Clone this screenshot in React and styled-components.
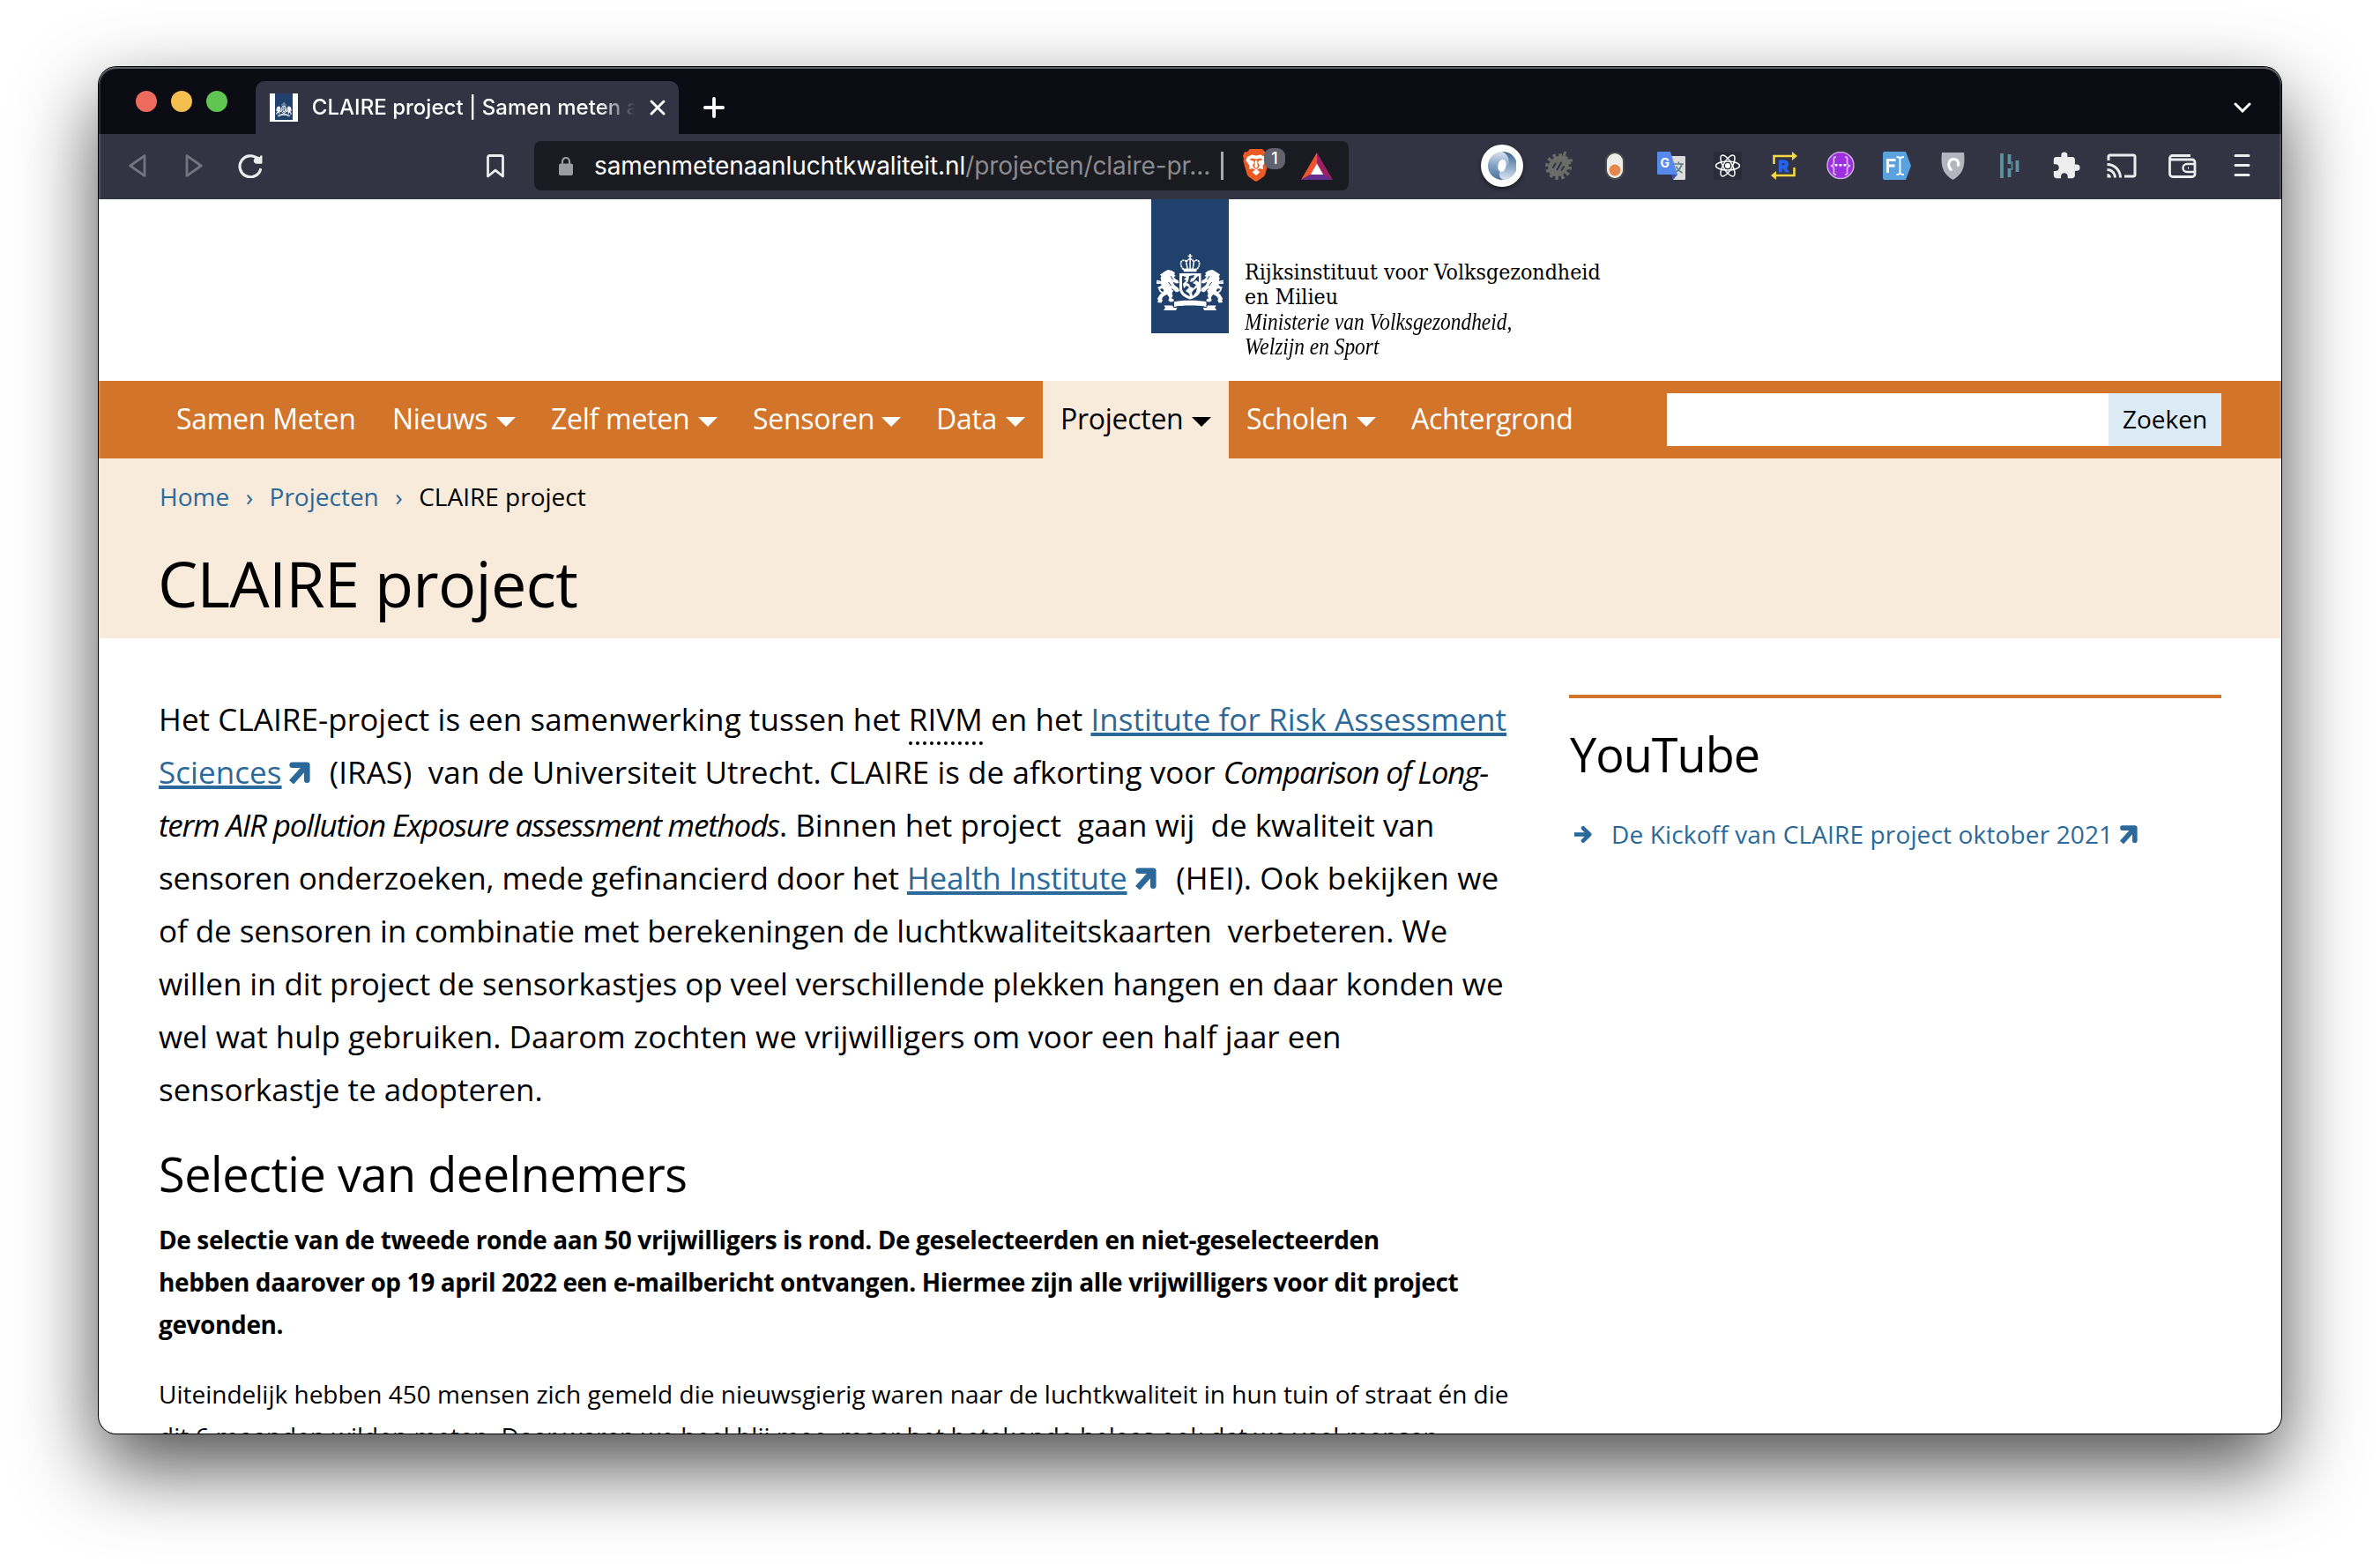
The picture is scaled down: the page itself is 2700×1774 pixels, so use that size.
import React from 'react';
import styled, { createGlobalStyle, css } from 'styled-components';
import { MdExtension, MdCast } from 'react-icons/md';

const sans = '"Open Sans", "Noto Sans", sans-serif';
const ui = 'Inter, Roboto, sans-serif';
const c = {
  orange: '#d2752b',
  sand: '#f8ebdc',
  link: '#2a6999',
  navy: '#20416c',
  tabs: '#0b0b14',
  toolbar: '#323443',
  address: '#1a1b20',
  icon: '#ededee',
};

const Global = createGlobalStyle`
  * { box-sizing: border-box; }
  body { margin: 0; background: #fff; }
  h1, h2, p, ul { margin: 0; padding: 0; font-weight: 400; }
  svg { display: block; flex: none; }
`;

const Desktop = styled.div`
  height: 1774px;
  padding: 76px 112px 148px;
  overflow: hidden;
  background: #fff;
`;

const Window = styled.div`
  position: relative;
  height: 1550px;
  display: flex;
  flex-direction: column;
  overflow: hidden;
  border-radius: 20px;
  background: #fff;
  box-shadow: 0 0 0 1px #000, 0 37px 90px rgba(0, 0, 0, 0.7);
  &::after {
    content: '';
    position: absolute;
    inset: 0;
    border-radius: 20px;
    pointer-events: none;
    box-shadow: inset 0 2px 0 rgba(255, 255, 255, 0.24), inset 0 0 0 2px rgba(255, 255, 255, 0.13);
  }
`;

/* ---------- browser chrome ---------- */

const TabBar = styled.div`
  height: 76px;
  flex: none;
  display: flex;
  padding-right: 12px;
  background: ${c.tabs};
`;

const Lights = styled.div`
  display: flex;
  gap: 16px;
  width: 178px;
  padding: 27px 0 0 42px;
`;

const Light = styled.span`
  width: 24px;
  height: 24px;
  border-radius: 50%;
  background: ${(p) => p.$color};
`;

const Tab = styled.div`
  display: flex;
  align-items: center;
  width: 480px;
  height: 60px;
  margin-top: 16px;
  padding: 0 14px 0 16px;
  border-radius: 10px 10px 0 0;
  background: ${c.toolbar};
`;

const Favicon = styled.span`
  display: flex;
  justify-content: center;
  width: 32px;
  height: 32px;
  background: #fff;
`;

const FaviconBar = styled.span`
  display: flex;
  justify-content: center;
  align-items: flex-end;
  width: 20px;
  height: 30px;
  padding-bottom: 4px;
  background: ${c.navy};
`;

const TabTitle = styled.span`
  width: 368px;
  margin: 0 16px 0 16px;
  overflow: hidden;
  white-space: nowrap;
  color: #fff;
  font: 500 24px/40px ${ui};
  letter-spacing: 0.02px;
  -webkit-mask-image: linear-gradient(90deg, #000 325px, transparent 367px);
  mask-image: linear-gradient(90deg, #000 325px, transparent 367px);
`;

const TabButton = styled.span`
  display: flex;
  align-items: center;
  justify-content: center;
  width: ${(p) => p.$width || 80}px;
  height: 60px;
  margin-top: 16px;
  margin-left: ${(p) => (p.$end ? 'auto' : 0)};
`;

const Toolbar = styled.div`
  height: 74px;
  flex: none;
  display: flex;
  padding: 8px 12px 0;
  background: ${c.toolbar};
`;

const Slot = styled.span`
  display: flex;
  align-items: center;
  justify-content: center;
  width: ${(p) => p.$width || 64}px;
  height: 56px;
  color: ${c.icon};
  ${(p) => p.$afterGap && css`margin-left: 214px;`}
`;

const AddressBar = styled.div`
  display: flex;
  align-items: center;
  width: 924px;
  height: 56px;
  margin-left: 12px;
  padding-left: 28px;
  border-radius: 8px;
  background: ${c.address};
`;

const Address = styled.span`
  width: 711px;
  margin-left: 24px;
  white-space: nowrap;
  color: #8b8b8f;
  font: 400 28px/56px ${ui};
  letter-spacing: -0.08px;
`;

const Domain = styled.span`
  color: #fff;
`;

const Divider = styled.span`
  width: 3px;
  height: 32px;
  margin-right: 22px;
  background: #a9aaae;
`;

const Shields = styled.span`
  position: relative;
  width: 66px;
  height: 38px;
`;

const ShieldCount = styled.span`
  position: absolute;
  left: 24px;
  top: -1px;
  width: 24px;
  height: 24px;
  border-radius: 9px;
  background: #60626f;
  color: #fff;
  text-align: center;
  font: 500 18px/24px ${ui};
`;

const Extensions = styled.div`
  display: flex;
  margin-left: auto;
`;

const RoundBadge = styled.span`
  display: flex;
  align-items: center;
  justify-content: center;
  width: 48px;
  height: 48px;
  border-radius: 50%;
  background: #fff;
  box-shadow: 0 2px 5px rgba(0, 0, 0, 0.5);
`;

/* ---------- site ---------- */

const SiteHeader = styled.header`
  display: grid;
  grid-template-columns: 1fr 88px 1fr;
  height: 206px;
  flex: none;
  background: #fff;
`;

const LogoBar = styled.div`
  grid-column: 2;
  display: flex;
  justify-content: center;
  align-items: flex-end;
  height: 152px;
  padding-bottom: 26px;
  background: ${c.navy};
`;

const LogoText = styled.div`
  padding: 69px 0 0 18px;
  color: #000;
  white-space: nowrap;
`;

const LogoLine = styled.div`
  height: 28px;
  font: 400 24.7px/28px 'DejaVu Serif Condensed', 'DejaVu Serif', serif;
  ${(p) =>
    p.$italic &&
    css`
      font: italic 400 28px/27px 'Liberation Serif', serif;
      transform: scaleX(0.835);
      transform-origin: left;
    `}
`;

const Nav = styled.nav`
  display: flex;
  height: 88px;
  flex: none;
  padding: 0 68px;
  background: ${c.orange};
`;

const NavItem = styled.a`
  display: flex;
  align-items: center;
  justify-content: space-between;
  width: ${(p) => p.$width}px;
  padding: 0 20px;
  color: ${(p) => (p.$active ? '#000' : '#fff')};
  background: ${(p) => (p.$active ? c.sand : 'transparent')};
  font: 400 32px/86px ${sans};
  letter-spacing: -0.28px;
  white-space: nowrap;
`;

const NavLabel = styled.span`
  height: 88px;
`;

const Caret = styled.span`
  margin-top: 5px;
  border: 11px solid transparent;
  border-top-color: currentColor;
  border-bottom: 0;
`;

const Search = styled.form`
  display: flex;
  width: 629px;
  height: 60px;
  margin: 14px 0 0 auto;
`;

const SearchField = styled.input`
  flex: 1;
  min-width: 0;
  border: 0;
  border-radius: 0;
  background: #fff;
`;

const SearchButton = styled.button`
  width: 128px;
  padding: 0 0 2px;
  border: 0;
  background: #dceaf6;
  color: #000;
  font: 400 28px/58px ${sans};
`;

const TitleBand = styled.section`
  height: 204px;
  flex: none;
  padding: 19px 68px 0;
  background: ${c.sand};
  color: #000;
`;

const Crumbs = styled.div`
  padding-left: 1px;
  font: 400 28px/48px ${sans};
`;

const CrumbLink = styled.a`
  color: ${c.link};
`;

const CrumbSep = styled.span`
  margin: 0 18.5px;
  color: ${c.link};
`;

const PageTitle = styled.h1`
  margin-top: 26px;
  margin-left: -1px;
  font: 400 72px/96px ${sans};
  letter-spacing: -0.8px;
`;

const Content = styled.main`
  display: grid;
  grid-template-columns: 1560px 740px;
  column-gap: 40px;
  padding: 62px 68px 0;
  color: #000;
`;

const Lead = styled.p`
  font: 400 35px/60px ${sans};
  white-space: nowrap;
`;

const Line = styled.span`
  letter-spacing: ${(p) => p.$tracking}px;
`;

const Abbr = styled.span`
  padding-bottom: 2px;
  border-bottom: 4px dotted #000;
`;

const TextLink = styled.a`
  color: ${c.link};
  text-decoration: underline;
  text-decoration-thickness: 4px;
  text-underline-offset: 2px;
  text-decoration-skip-ink: none;
`;

const Term = styled.em`
  letter-spacing: -1.2px;
`;

const Heading = styled.h2`
  margin-top: ${(p) => p.$top}px;
  margin-left: ${(p) => p.$pull || 0}px;
  font: 400 54px/64px ${sans};
  letter-spacing: ${(p) => p.$tracking}px;
`;

const Strong = styled.p`
  margin-top: 19px;
  font: 700 28px/48px ${sans};
  letter-spacing: -0.39px;
  white-space: nowrap;
`;

const Body = styled.p`
  margin-top: 31px;
  font: 400 28px/48px ${sans};
  white-space: nowrap;
`;

const Aside = styled.aside`
  margin-top: 2px;
  border-top: 4px solid ${c.orange};
`;

const AsideLink = styled.a`
  display: flex;
  align-items: center;
  margin-top: 35px;
  padding-left: 6px;
  color: ${c.link};
  font: 400 28px/48px ${sans};
  letter-spacing: 0.14px;
  white-space: nowrap;
`;

const AsideLabel = styled.span`
  margin: 0 7px 0 22px;
`;

const InlineIcon = styled.svg`
  && {
    display: inline-block;
  }
  width: ${(p) => p.$size}px;
  height: ${(p) => p.$size}px;
  margin: ${(p) => p.$margin || 0};
`;

/* ---------- drawings ---------- */

const External = ({ size = 25, margin }) => (
  <InlineIcon $size={size} $margin={margin} viewBox="0 0 24 24" fill="none" stroke={c.link} strokeWidth="6.400">
    <path d="M4.500 3.600H20.400V20" strokeLinecap="round" strokeLinejoin="round" />
    <path d="M19.500 4.500 3.400 22.400" />
  </InlineIcon>
);

const Arms = ({ width, height }) => (
  <svg width={width} height={height} viewBox="0 0 76 64" preserveAspectRatio="none" fill="#fff">
    <path d="M37.300 0h1.600v1.700h1.600v1.500h-1.600V6h-1.600V3.200h-1.600V1.700h1.600z" />
    <path
      d="M30.500 17.500c-3-3-4-8-1.500-9.700 2-1.300 4.500-.2 5 1.500 1-2.800 3-3.600 4.100-3.600s3.100.8 4.100 3.600c.5-1.700 3-2.800 5-1.500 2.500 1.700 1.500 6.700-1.500 9.700z"
      fill="none"
      stroke="#fff"
      strokeWidth="1.700"
      strokeDasharray="2.200 .6"
    />
    <path d="M38.100 6v11M33.800 9.500l1.400 8M42.400 9.500l-1.400 8" stroke="#fff" strokeWidth="1.500" />
    <path d="M30.500 16.800h15.200l-.4 3.500H30.900z" />
    <path
      fillRule="evenodd"
      d="M26 22h24.500v17c0 7-6 10.500-12.300 12.500C32 49.500 26 46 26 39zM29 25l5 1-3 3 3 1-4 4 1 5 3-3 3 2-4 4 4 3 1 3c-4-1.500-9-4-9-9zM37 25l6-1-1 3-3 1-1 4 4-1 4-5 2-1v7l-3-2-4 3 4 2-3 4-4-2-1-3-3-1 2-2zM42 41l4-3-1 5-4 5-1-4z"
    />
    <g id="lion">
      <path d="M10 19.500l3-1.500 4.500 1 3.500 2.500-1 2 2 1.500-2.500 1 2 2.500 3 1.500 1 3-3 .5-4-2 2 4 4.500 3.500 1 3-3 1.500-4-2-1.500 3.500 1 2.500-1.500 3 2.500 1v2.500l-4 .5-2-1.800 1-3.200-2.500-3.500-4 2-2 3 1 1.500-1.500 3-4.500-.5 1-2.200-1-2 3-4.800 4.500-4.200-1.500-2.500-4 .5-2-1.700 2.500-1.200 3.500.2-2-3-4-.2-3-1.500-3 1 1-2.300 3.500-.2 4 1.500 2-2-1-3 1-2-1.500-2z" />
      <path
        d="M8 44C2 43 2.500 38 5.500 36.500S10 33 6.500 31M1 30.500l3.500 1"
        fill="none"
        stroke="#fff"
        strokeWidth="1.700"
        strokeLinecap="round"
      />
      <path d="M16 25l2.500 4M13.500 32l3 4M17 39.500l3.500 2.500" stroke={c.navy} strokeWidth="1" />
    </g>
    <use href="#lion" transform="translate(76.200) scale(-1 1)" />
    <path d="M20 54.500c6-2.300 30-2.300 36.500 0v5.500c-7-2-29-2-36.500 0zM8.500 58.500h9.500l1.500 2.500 4 .2-1.500 2.800H8l2-3zM67.700 58.500h-9.500l-1.500 2.500-4 .2 1.500 2.800h14l-2-3z" />
  </svg>
);

const Triangle = ({ flip }) => (
  <svg width="20" height="26" viewBox="0 0 20 26" fill="none" stroke="#72747f" strokeWidth="2.800" strokeLinejoin="round">
    <path d={flip ? 'M2 1.700 18.200 13 2 24.300z' : 'M18 1.700 1.800 13 18 24.300z'} />
  </svg>
);

const Reload = () => (
  <svg width="28" height="27" viewBox="0 0 28 27" fill="none">
    <path d="M25.500 17.500A12 12 0 1 1 22.300 5" stroke={c.icon} strokeWidth="3.200" strokeLinecap="round" />
    <path d="M27.500 1.500v8.200a1 1 0 0 1-1 1h-5.500a3.500 3.500 0 0 1-2.200-6l2.500-2.200 3.500.5 1-1.800z" fill={c.icon} />
  </svg>
);

const Bookmark = () => (
  <svg width="20" height="27" viewBox="0 0 20 27" fill="none" stroke={c.icon} strokeWidth="2.800" strokeLinejoin="round">
    <path d="M1.500 3.500a2 2 0 0 1 2-2h13a2 2 0 0 1 2 2V25L10 18.200 1.500 25z" />
  </svg>
);

const Lock = () => (
  <svg width="16" height="21" viewBox="0 0 16 21">
    <rect y="7.500" width="16" height="13.500" rx="2" fill="#9a9ca1" />
    <path d="M4 8V5a4 4 0 0 1 8 0v3" fill="none" stroke="#9a9ca1" strokeWidth="2.200" />
  </svg>
);

const Brave = () => (
  <svg width="30" height="37" viewBox="0 0 30 37">
    <path d="M8 0h14l3.500 3.500L28 3l2 5-1 3 .5 3-4 14c-.5 2-2 3.500-3.500 4.500l-5 3.500c-1.300 1-2.700 1-4 0l-5-3.500c-1.500-1-3-2.500-3.500-4.500L.5 14 1 11 0 8l2-5 2.500.5z" fill="#ec5a24" />
    <path d="M5 9l5-2.500 5 1 5-1L25 9l1.500 4-4 6 .5 4-4-1-4 2.500L11 22l-4 1 .5-4-4-6z" fill="#fff" />
    <path d="M7 12l5 1.500 1 2-2 3 1.500 3 2.500 1.500 2.500-1.500 1.500-3-2-3 1-2 5-1.500-3.500-1.500-3.500 1h-2l-3.500-1z" fill="#ec5a24" />
    <path d="M14 13h2l.8 7-1.800 2-1.800-2z" fill="#fff" />
    <path d="M10.500 26l4.500-2.500 4.500 2.500-4.500 4z" fill="#fff" />
  </svg>
);

const Rewards = () => (
  <svg width="36" height="31" viewBox="0 0 36 31">
    <path d="M18 0 0 31l11-6 7-12z" fill="#f0532d" />
    <path d="M18 0l18 31-11-6-7-12z" fill="#9e1f63" />
    <path d="M0 31h36l-11-6.500H11z" fill="#662d91" />
    <path d="M18 12.500 25.200 25H10.800z" fill="#fff" />
  </svg>
);

const Swirl = () => (
  <svg width="32" height="32" viewBox="0 0 32 32">
    <defs>
      <linearGradient id="swirlA" x1=".5" y1="0" x2=".4" y2="1">
        <stop offset="0" stopColor="#d9e3ee" />
        <stop offset=".5" stopColor="#86a5c6" />
        <stop offset="1" stopColor="#4a6f99" />
      </linearGradient>
      <linearGradient id="swirlB" x1=".5" y1="1" x2=".6" y2="0">
        <stop offset="0" stopColor="#d9e3ee" />
        <stop offset=".5" stopColor="#86a5c6" />
        <stop offset="1" stopColor="#3d628d" />
      </linearGradient>
    </defs>
    <circle cx="16" cy="16" r="16" fill="url(#swirlA)" />
    <path d="M16 0c7 2 10 12 6 17.500-2 3-4 5.500-8.500 5.500C12 28 14 31 18 32A16 16 0 0 0 16 0z" fill="url(#swirlB)" />
    <ellipse cx="16" cy="16" rx="4.600" ry="7.200" transform="rotate(12 16 16)" fill="#fff" />
  </svg>
);

const Bug = () => (
  <svg width="34" height="34" viewBox="0 0 34 34" fill="none" stroke="#6b6b68">
    <circle cx="17" cy="18" r="12" strokeWidth="6" strokeDasharray="3.200 3.080" />
    <ellipse cx="17" cy="17.500" rx="13" ry="10.500" transform="rotate(-45 17 17.500)" fill="#6b6b68" stroke="none" />
    <path d="M22 8l3-7M27 11l6 0" strokeWidth="3" />
    <path d="M13.500 14.500l-2.500 4.500M20 13.500l-4.500 8M23 18l-2.500 4" stroke={c.toolbar} strokeWidth="2" strokeLinecap="round" />
  </svg>
);

const Toggle = () => (
  <svg width="22" height="32" viewBox="0 0 22 32">
    <rect x="1" y="1" width="20" height="30" rx="10" fill="#ededec" stroke="#4a4a4a" strokeWidth="2" />
    <circle cx="11" cy="21" r="6.500" fill="#e8854a" />
  </svg>
);

const Translate = () => (
  <svg width="32" height="32" viewBox="0 0 32 32">
    <path d="M16 5h15a1 1 0 0 1 1 1v25a1 1 0 0 1-1 1H18z" fill="#dcdcdc" />
    <path d="M19 14h11M24.500 11.500V14M28 14c-1 4.500-4 7.500-7.500 9.500M21.500 16.500c1.500 3.500 4 6 7 7.500" stroke="#5e7d86" strokeWidth="1.700" fill="none" />
    <path d="M16 26h7l-5 6z" fill="#3a50b8" />
    <path d="M1 0h14l8 26H1a1 1 0 0 1-1-1V1a1 1 0 0 1 1-1z" fill="#5788ec" />
    <text x="3.500" y="18" fontFamily="Inter, sans-serif" fontWeight="700" fontSize="14" fill="#fff">G</text>
  </svg>
);

const Atom = () => (
  <svg width="32" height="32" viewBox="0 0 32 32" fill="none" stroke="#fff" strokeWidth="1.500">
    <rect width="32" height="32" rx="2" fill="#292b38" stroke="none" />
    <ellipse cx="16" cy="16" rx="13.500" ry="5" />
    <ellipse cx="16" cy="16" rx="13.500" ry="5" transform="rotate(60 16 16)" />
    <ellipse cx="16" cy="16" rx="13.500" ry="5" transform="rotate(120 16 16)" />
    <circle cx="16" cy="16" r="3" fill="#fff" stroke="none" />
  </svg>
);

const Repeat = () => (
  <svg width="32" height="32" viewBox="0 0 32 32">
    <path d="M4.500 14V5H25M27.500 18v9H7" fill="none" stroke="#f8d541" strokeWidth="2.600" />
    <path d="M25 0l6 5-6 5zM7 22l-6 5 6 5z" fill="#f8d541" />
    <text x="9.500" y="22.500" fontFamily="Inter, sans-serif" fontWeight="800" fontSize="18" fill="#2463f0" stroke="#2463f0">R</text>
  </svg>
);

const Braces = () => (
  <svg width="32" height="32" viewBox="0 0 32 32">
    <circle cx="16" cy="15.500" r="15" fill="#9c2fe0" stroke="#c9a9dd" strokeWidth="1.500" />
    <g fill="none" stroke="#dcb8f2" strokeWidth="1.800">
      <path d="M11 6C7 6 8.500 9 8.500 12S7.500 15.500 5 16c2.500.5 3.500 1 3.500 4S7 26 11 26M21 6c4 0 2.500 3 2.500 6s1 3.500 3.500 4c-2.500.5-3.500 1-3.500 4s1.500 6-2.500 6" />
    </g>
    <path d="M9.500 14h3v2.500h-3zM14.500 14h3v2.500h-3zM19.500 14h3v2.500h-3z" fill="#fff" />
  </svg>
);

const FieldTag = () => (
  <svg width="32" height="32" viewBox="0 0 32 32">
    <path d="M2 0h24l6 16-6 16H2a2 2 0 0 1-2-2V2a2 2 0 0 1 2-2z" fill="#5aa2df" />
    <path d="M5.500 24V9.500h9M5.500 16h8" fill="none" stroke="#fff" strokeWidth="2.800" />
    <path d="M15.500 6c3 0 4 1 4 2.500v15c0 1.500-1 2.500-4 2.500M24 6c-3 0-4.500 1-4.500 2.500v15c0 1.500 1.500 2.500 4.500 2.500" fill="none" stroke="#fff" strokeWidth="1.900" />
  </svg>
);

const GreyShield = () => (
  <svg width="27" height="31" viewBox="0 0 27 31">
    <path d="M1 0h25c1.500 14 0 24-12.500 31C1 24-.5 14 1 0z" fill="#b3b6bf" />
    <path d="M11.500 19.500C6.500 15 9 7.500 14.500 7.500c4 0 6 3.500 5 7" fill="none" stroke="#fff" strokeWidth="3" strokeLinecap="round" />
  </svg>
);

const Bars = () => (
  <svg width="24" height="30" viewBox="0 0 24 30" stroke="#5e92a3" strokeWidth="3.800">
    <path d="M3 1v28" />
    <path d="M11.500 2v11M11.500 18v10M20.500 9v13" />
    <path d="M14.500 10v10" strokeWidth="1.500" />
  </svg>
);

const Wallet = () => (
  <svg width="32" height="27" viewBox="0 0 32 27" fill="none" stroke={c.icon} strokeWidth="2.800" strokeLinejoin="round">
    <path d="M1.500 4.500A3 3 0 0 1 4.500 1.500H25M27 6H5a3.500 3.500 0 0 1-3.500-2v18a3.500 3.500 0 0 0 3.500 3.500h22a3 3 0 0 0 3-3V9a3 3 0 0 0-3-3z" />
    <path d="M30 11h-9a4.500 4.500 0 0 0 0 9h9M22 15.500h1" strokeWidth="2.400" />
  </svg>
);

const Menu = () => (
  <svg width="20" height="28" viewBox="0 0 20 28" stroke={c.icon} strokeWidth="3" strokeLinecap="round">
    <path d="M2 2.500h15M2 13.500h15M2 24.500h15" />
  </svg>
);

const ArrowRight = () => (
  <svg width="20" height="19" viewBox="0 0 20 19" fill="none" stroke={c.link} strokeWidth="4.600">
    <path d="M0 9.500h16" />
    <path d="M10 2.300l7.200 7.200-7.200 7.200" strokeLinecap="round" strokeLinejoin="round" />
  </svg>
);

const navItems = [
  { label: 'Samen Meten', width: 245 },
  { label: 'Nieuws', width: 180, caret: true },
  { label: 'Zelf meten', width: 229, caret: true },
  { label: 'Sensoren', width: 208, caret: true },
  { label: 'Data', width: 141, caret: true },
  { label: 'Projecten', width: 211, caret: true, active: true },
  { label: 'Scholen', width: 187, caret: true },
  { label: 'Achtergrond', width: 222 },
];

const BrowserChrome = () => (
  <>
    <TabBar>
      <Lights>
        <Light $color="#ed6a5e" />
        <Light $color="#f5bf4f" />
        <Light $color="#61c554" />
      </Lights>
      <Tab>
        <Favicon>
          <FaviconBar>
            <Arms width={18} height={16} />
          </FaviconBar>
        </Favicon>
        <TabTitle>CLAIRE project | Samen meten aan</TabTitle>
        <svg width="20" height="18" viewBox="0 0 20 18" stroke="#fff" strokeWidth="2.900" strokeLinecap="round">
          <path d="M3 2l14 14M17 2 3 16" />
        </svg>
      </Tab>
      <TabButton>
        <svg width="24" height="24" viewBox="0 0 24 24" stroke="#fff" strokeWidth="3.800" strokeLinecap="round">
          <path d="M12 1.900v20.200M1.900 12h20.200" />
        </svg>
      </TabButton>
      <TabButton $end $width={64}>
        <svg width="20" height="12" viewBox="0 0 20 12" fill="none" stroke="#fff" strokeWidth="3" strokeLinecap="round">
          <path d="M2 2l8 8 8-8" />
        </svg>
      </TabButton>
    </TabBar>
    <Toolbar>
      <Slot><Triangle /></Slot>
      <Slot><Triangle flip /></Slot>
      <Slot><Reload /></Slot>
      <Slot $afterGap><Bookmark /></Slot>
      <AddressBar>
        <Lock />
        <Address>
          <Domain>samenmetenaanluchtkwaliteit.nl</Domain>/projecten/claire-pr...
        </Address>
        <Divider />
        <Shields>
          <Brave />
          <ShieldCount>1</ShieldCount>
        </Shields>
        <Rewards />
      </AddressBar>
      <Extensions>
        <Slot><RoundBadge><Swirl /></RoundBadge></Slot>
        <Slot><Bug /></Slot>
        <Slot><Toggle /></Slot>
        <Slot><Translate /></Slot>
        <Slot><Atom /></Slot>
        <Slot><Repeat /></Slot>
        <Slot><Braces /></Slot>
        <Slot><FieldTag /></Slot>
        <Slot $width={62}><GreyShield /></Slot>
        <Slot $width={68}><Bars /></Slot>
        <Slot $width={60}><MdExtension size={34} /></Slot>
        <Slot $width={66}><MdCast size={36} /></Slot>
        <Slot $width={72}><Wallet /></Slot>
        <Slot><Menu /></Slot>
      </Extensions>
    </Toolbar>
  </>
);

export default function App() {
  return (
    <Desktop>
      <Global />
      <Window>
        <BrowserChrome />
        <SiteHeader>
          <LogoBar>
            <Arms width={76} height={64} />
          </LogoBar>
          <LogoText>
            <LogoLine>Rijksinstituut voor Volksgezondheid</LogoLine>
            <LogoLine>en Milieu</LogoLine>
            <LogoLine $italic>Ministerie van Volksgezondheid,</LogoLine>
            <LogoLine $italic>Welzijn en Sport</LogoLine>
          </LogoText>
        </SiteHeader>
        <Nav>
          {navItems.map((item) => (
            <NavItem key={item.label} $width={item.width} $active={item.active}>
              <NavLabel>{item.label}</NavLabel>
              {item.caret && <Caret />}
            </NavItem>
          ))}
          <Search>
            <SearchField aria-label="Zoeken" />
            <SearchButton type="button">Zoeken</SearchButton>
          </Search>
        </Nav>
        <TitleBand>
          <Crumbs>
            <CrumbLink>Home</CrumbLink>
            <CrumbSep>›</CrumbSep>
            <CrumbLink>Projecten</CrumbLink>
            <CrumbSep>›</CrumbSep>
            <span>CLAIRE project</span>
          </Crumbs>
          <PageTitle>CLAIRE project</PageTitle>
        </TitleBand>
        <Content>
          <article>
            <Lead>
              <Line $tracking={0.07}>
                Het CLAIRE-project is een samenwerking tussen het <Abbr>RIVM</Abbr> en het{' '}
                <TextLink>Institute for Risk Assessment<br />Sciences</TextLink>
              </Line>
              <External margin="0 4px 0 7px" />
              <Line $tracking={0.04}>
                {'\u00a0 '}(IRAS){'\u00a0 '}van de Universiteit Utrecht. CLAIRE is de afkorting voor{' '}
              </Line>
              <Term>Comparison of Long-<br />term AIR pollution Exposure assessment methods</Term>. Binnen het
              project{'\u00a0 '}gaan wij{'\u00a0 '}de kwaliteit van<br />
              <Line $tracking={-0.15}>
                sensoren onderzoeken, mede gefinancierd door het <TextLink>Health Institute</TextLink>
              </Line>
              <External margin="0 4px 0 8px" />
              <Line $tracking={0.18}>{'\u00a0 '}(HEI). Ook bekijken we<br /></Line>
              <Line $tracking={-0.07}>
                of de sensoren in combinatie met berekeningen de luchtkwaliteitskaarten{'\u00a0 '}verbeteren. We<br />
                willen in dit project de sensorkastjes op veel verschillende plekken hangen en daar konden we<br />
              </Line>
              wel wat hulp gebruiken. Daarom zochten we vrijwilligers om voor een half jaar een<br />
              sensorkastje te adopteren.
            </Lead>
            <Heading $top={33} $tracking={-0.45}>Selectie van deelnemers</Heading>
            <Strong>
              De selectie van de tweede ronde aan 50 vrijwilligers is rond. De geselecteerden en niet-geselecteerden<br />
              hebben daarover op 19 april 2022 een e-mailbericht ontvangen. Hiermee zijn alle vrijwilligers voor dit project<br />
              gevonden.
            </Strong>
            <Body>
              Uiteindelijk hebben 450 mensen zich gemeld die nieuwsgierig waren naar de luchtkwaliteit in hun tuin of straat én die<br />
              dit 6 maanden wilden meten. Daar waren we heel blij mee, maar het betekende helaas ook dat we veel mensen
            </Body>
          </article>
          <Aside>
            <Heading $top={31} $tracking={-1} $pull={1}>YouTube</Heading>
            <AsideLink>
              <ArrowRight />
              <AsideLabel>De Kickoff van CLAIRE project oktober 2021</AsideLabel>
              <External size={21} />
            </AsideLink>
          </Aside>
        </Content>
      </Window>
    </Desktop>
  );
}
